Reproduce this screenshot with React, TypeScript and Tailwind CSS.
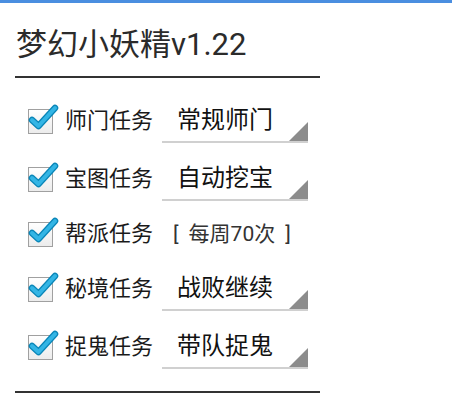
import React from "react"

const tasks = [
  { id: 1, label: "师门任务", value: "常规师门", spinner: true },
  { id: 2, label: "宝图任务", value: "自动挖宝", spinner: true },
  { id: 3, label: "帮派任务", value: "每周70次", spinner: false },
  { id: 4, label: "秘境任务", value: "战败继续", spinner: true },
  { id: 5, label: "捉鬼任务", value: "带队捉鬼", spinner: true },
]

const font = { fontFamily: 'Roboto, "Noto Sans CJK SC", sans-serif' }

function HoloCheckbox() {
  return (
    <div className="relative w-[25px] h-[25px] shrink-0">
      <div className="absolute inset-0 border-[1.5px] border-[#a0a0a0] bg-gradient-to-b from-white to-[#ececec]" />
      <svg className="absolute left-[-2px] top-[-7px]" width="33" height="33" viewBox="0 0 33 33">
        <path d="M6 18 L12.5 24 L29 6" fill="none" stroke="#0a86b8" strokeWidth="6.5" strokeLinecap="round" strokeLinejoin="round" />
        <path d="M6 18 L12.5 24 L29 6" fill="none" stroke="#33b5e5" strokeWidth="4" strokeLinecap="round" strokeLinejoin="round" />
      </svg>
    </div>
  )
}

function Spinner({ value }: { value: string }) {
  return (
    <div className="relative w-[146px] h-[44px] flex items-center pl-[15px] border-b-2 border-[#d0d0d0]">
      <span className="text-[24px] leading-none text-[#111]">{value}</span>
      <div className="absolute right-0 bottom-0 w-[19px] h-[19px] bg-[#8c8c8c] [clip-path:polygon(100%_0,100%_100%,0_100%)]" />
    </div>
  )
}

function TaskRow({ item }: { item: (typeof tasks)[0] }) {
  return (
    <div className={`flex items-center ${item.spinner ? "h-[58px]" : "h-[52px]"}`}>
      <div className="w-[28px]" />
      <HoloCheckbox />
      <span className="ml-[12px] w-[97px] text-[22px] leading-none text-[#1a1a1a]">{item.label}</span>
      {item.spinner ? (
        <Spinner value={item.value} />
      ) : (
        <div className="ml-[11px] flex items-center gap-[10px] text-[21px] leading-none text-[#333]">
          <span>[</span>
          <span>{item.value}</span>
          <span>]</span>
        </div>
      )}
    </div>
  )
}

export default function App() {
  return (
    <div className="w-[452px] h-[404px] bg-white overflow-hidden" style={font}>
      <div className="h-[3px] bg-[#4a8ee0]" />
      <div className="px-[15px]">
        <h1 className="pt-[22px] pl-[1px] h-[73px] text-[31px] leading-[40px] text-[#2b2b2b]">梦幻小妖精v1.22</h1>
        <div className="w-[305px] h-[2px] bg-[#333]" />
      </div>
      <div className="pt-[14px]">
        {tasks.map((t) => (
          <TaskRow key={t.id} item={t} />
        ))}
      </div>
      <div className="px-[15px] pt-[15px]">
        <div className="w-[305px] h-[2px] bg-[#333]" />
      </div>
    </div>
  )
}
